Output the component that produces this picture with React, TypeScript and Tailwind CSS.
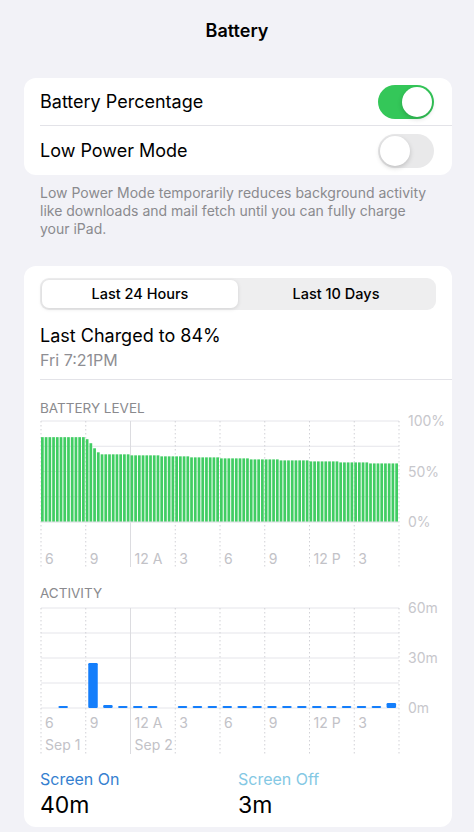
import React from "react";

const FONT = { fontFamily: "Inter, 'Liberation Sans', sans-serif" };

const HOURS = ["6", "9", "12 A", "3", "6", "9", "12 P", "3"];
const COL = 358 / 8;

function batteryLevel(i: number) {
  if (i < 12) return 84;
  const drop = [82, 78, 73, 69];
  if (i < 16) return drop[i - 12];
  return 67 - Math.floor(((i - 16) * 10) / 80);
}

// minutes of screen-on per hour slot
const activity: Record<number, number> = {
  1: 1, 3: 27, 4: 1.8, 23: 3,
};

function Toggle({ on }: { on: boolean }) {
  return (
    <div
      className={`relative h-[34px] w-[56px] rounded-full ${
        on ? "bg-[#34c759]" : "bg-[#e9e9ea]"
      }`}
    >
      <div
        className={`absolute top-[2px] h-[30px] w-[30px] rounded-full bg-white shadow-[0_2px_5px_rgba(0,0,0,0.18)] ${
          on ? "right-[2px]" : "left-[2px]"
        }`}
      />
    </div>
  );
}

function Grid({ top, bottom, lineBottom }: { top: number; bottom: number; lineBottom: number }) {
  const step = (bottom - top) / 4;
  return (
    <>
      {[0, 1, 2, 3, 4].map((k) => (
        <line
          key={"h" + k}
          x1={1}
          x2={359}
          y1={top + k * step}
          y2={top + k * step}
          stroke="#e5e5ea"
          strokeWidth={1}
        />
      ))}
      {Array.from({ length: 9 }).map((_, k) => (
        <line
          key={"v" + k}
          x1={1 + k * COL}
          x2={1 + k * COL}
          y1={top}
          y2={lineBottom}
          stroke={k === 2 ? "#dcdce0" : "#d1d1d6"}
          strokeWidth={1}
          strokeDasharray={k === 2 ? undefined : "1.5 2.5"}
        />
      ))}
    </>
  );
}

function BatteryChart() {
  const bw = 358 / 96;
  const top = 10;
  const bottom = 111;
  return (
    <svg width={412} height={158} className="block" style={FONT}>
      <Grid top={top} bottom={bottom} lineBottom={156} />
      {Array.from({ length: 96 }).map((_, i) => {
        const h = (batteryLevel(i) / 100) * (bottom - top);
        return (
          <rect
            key={i}
            x={1 + i * bw}
            y={bottom - h}
            width={bw - 1}
            height={h}
            fill="#41cd63"
          />
        );
      })}
      <line x1={1} x2={359} y1={bottom} y2={bottom} stroke="#e5e5ea" />
      {HOURS.map((t, k) => (
        <text key={k} x={5 + k * COL} y={153} fontSize={14} fill="#c2c2c7">
          {t}
        </text>
      ))}
      <text x={368} y={15} fontSize={14} fill="#c7c7cc">100%</text>
      <text x={368} y={66} fontSize={14} fill="#c7c7cc">50%</text>
      <text x={368} y={116} fontSize={14} fill="#c7c7cc">0%</text>
    </svg>
  );
}

function ActivityChart() {
  const slot = 358 / 24;
  const top = 14;
  const bottom = 114;
  return (
    <svg width={412} height={160} className="block" style={FONT}>
      <Grid top={top} bottom={bottom} lineBottom={160} />
      {Array.from({ length: 24 }).map((_, i) => {
        if (i === 0 || i === 2 || i === 8) return null;
        const min = activity[i] ?? 1.2;
        const h = Math.max(2, (min / 60) * (bottom - top));
        return (
          <rect
            key={i}
            x={1 + i * slot + 2.5}
            y={bottom - h}
            width={9.5}
            height={h}
            rx={1.2}
            fill="#147efb"
          />
        );
      })}
      {HOURS.map((t, k) => (
        <text key={k} x={5 + k * COL} y={134} fontSize={14} fill="#c2c2c7">
          {t}
        </text>
      ))}
      <text x={5} y={156} fontSize={14} fill="#c2c2c7">Sep 1</text>
      <text x={5 + 2 * COL} y={156} fontSize={14} fill="#c2c2c7">Sep 2</text>
      <text x={368} y={19} fontSize={14} fill="#c7c7cc">60m</text>
      <text x={368} y={69} fontSize={14} fill="#c7c7cc">30m</text>
      <text x={368} y={119} fontSize={14} fill="#c7c7cc">0m</text>
    </svg>
  );
}

export default function App() {
  return (
    <div
      className="h-[832px] w-full overflow-hidden bg-[#f2f2f7] text-black"
      style={FONT}
    >
      {/* Nav title */}
      <div className="flex h-[60px] items-center justify-center text-[18px] font-semibold">
        Battery
      </div>

      {/* Toggles */}
      <div className="ml-6 mr-[22px] mt-[18px] rounded-[12px] bg-white pl-4">
        <div className="flex h-[48px] items-center justify-between border-b border-[#e3e3e8] pr-[18px]">
          <span className="text-[18px]">Battery Percentage</span>
          <Toggle on />
        </div>
        <div className="flex h-[49px] items-center justify-between pr-[18px]">
          <span className="text-[18px]">Low Power Mode</span>
          <Toggle on={false} />
        </div>
      </div>
      <p className="ml-6 mr-[22px] mt-[9px] pl-4 pr-6 text-[14px] leading-[18px] text-[#8a8a8e]">
        Low Power Mode temporarily reduces background activity like downloads
        and mail fetch until you can fully charge your iPad.
      </p>

      {/* Usage card */}
      <div className="ml-6 mr-[22px] mt-[28px] rounded-[12px] bg-white pb-2 pl-4">
        <div className="pr-4 pt-3">
          <div className="flex h-[32px] rounded-[9px] bg-[#eeeeef] p-[2px] text-[14.5px] font-medium">
            <div className="flex flex-1 items-center justify-center rounded-[7px] bg-white shadow-[0_1px_4px_rgba(0,0,0,0.12)]">
              Last 24 Hours
            </div>
            <div className="flex flex-1 items-center justify-center">
              Last 10 Days
            </div>
          </div>
        </div>
        <div className="border-b border-[#e3e3e8] pb-[8px] pt-[13px]">
          <div className="text-[18px] leading-[26px]">Last Charged to 84%</div>
          <div className="text-[16px] leading-[22px] text-[#8e8e93]">
            Fri 7:21PM
          </div>
        </div>

        <div className="mt-[20px] text-[13.5px] leading-[16px] text-[#8a8a8e]">
          BATTERY LEVEL
        </div>
        <div className="mt-[-5px]">
          <BatteryChart />
        </div>

        <div className="mt-[16px] text-[13.5px] leading-[16px] text-[#8a8a8e]">
          ACTIVITY
        </div>
        <div className="mt-[-7px]">
          <ActivityChart />
        </div>

        <div className="mt-[15px] flex">
          <div className="w-[198px]">
            <div className="text-[16px] leading-[20px] text-[#3580d0]">
              Screen On
            </div>
            <div className="mt-[2px] text-[23px] leading-[28px]">40m</div>
          </div>
          <div>
            <div className="text-[16px] leading-[20px] text-[#84c8e4]">
              Screen Off
            </div>
            <div className="mt-[2px] text-[23px] leading-[28px]">3m</div>
          </div>
        </div>
      </div>
    </div>
  );
}
